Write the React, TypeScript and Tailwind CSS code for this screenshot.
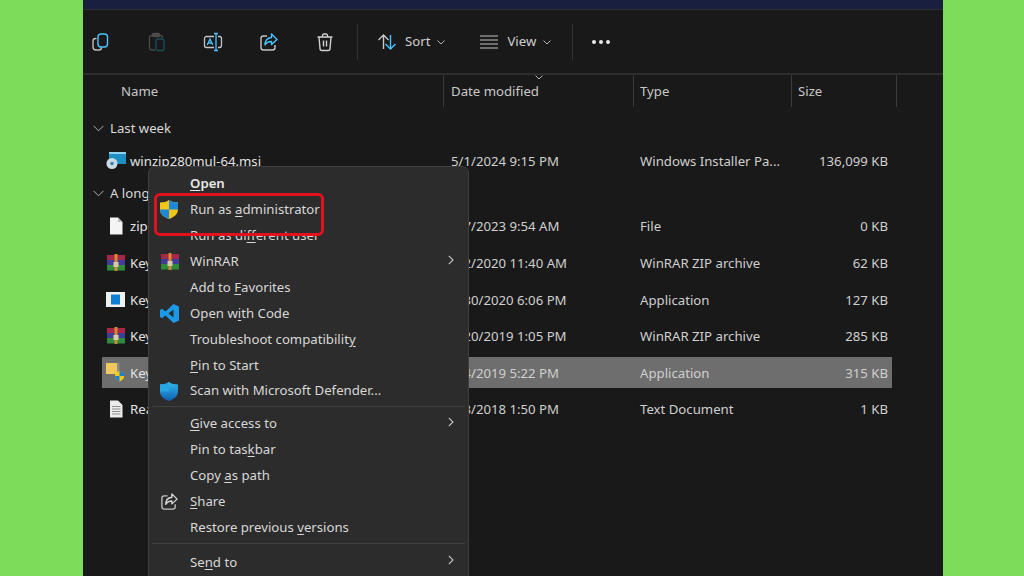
import React from "react";

const Chevron = ({ className = "" }: { className?: string }) => (
  <svg width="8" height="5" viewBox="0 0 8 5" className={className} fill="none" stroke="#b5b5b5" strokeWidth="1">
    <path d="M.5.5 4 4 7.5.5" />
  </svg>
);
const CopyIcon = () => (
  <svg width="20" height="20" viewBox="0 0 20 20" fill="none" strokeWidth="1.4" strokeLinecap="round">
    <path d="M5 6.500H4.500A2.500 2.500 0 0 0 2 9v6a3 3 0 0 0 3 3h3a2.500 2.500 0 0 0 2.500-2" stroke="#bdbdbd" />
    <rect x="7" y="2" width="9.500" height="13" rx="3" stroke="#4cc2ff" />
  </svg>
);
const PasteIcon = () => (
  <svg width="20" height="20" viewBox="0 0 20 20" fill="none" strokeWidth="1.3">
    <path d="M8 18H4.500A2 2 0 0 1 2.500 16V5.500a2 2 0 0 1 2-2h9a2 2 0 0 1 2 2V6" stroke="#4c4c4c" />
    <rect x="5.500" y="1.500" width="7" height="3" rx="1" fill="#4c4c4c" stroke="#4c4c4c" />
    <rect x="9" y="7" width="8" height="11.500" rx="2" stroke="#1e4a60" />
  </svg>
);
const RenameIcon = () => (
  <svg width="20" height="20" viewBox="0 0 20 20" fill="none" strokeWidth="1.3">
    <path d="M11 4.500H3.500A2 2 0 0 0 1.500 6.500v7a2 2 0 0 0 2 2H11M15 4.500h1.500a2 2 0 0 1 2 2v7a2 2 0 0 1-2 2H15" stroke="#c4c4c4" />
    <path d="M13 1.500v17M11 1.500h4M11 18.500h4" stroke="#4cc2ff" />
    <path d="M4.200 13 7 7l2.800 6M5.200 11h3.600" stroke="#4cc2ff" />
  </svg>
);
const ShareIcon = ({ accent = "#4cc2ff", w = 20 }: { accent?: string; w?: number }) => (
  <svg width={w} height={w} viewBox="0 0 20 20" fill="none" strokeWidth="1.4" strokeLinejoin="round">
    <path d="M8 4H4.500A2.500 2.500 0 0 0 2 6.500v9A2.500 2.500 0 0 0 4.500 18h9a2.500 2.500 0 0 0 2.500-2.500V13" stroke="#c4c4c4" />
    <path d="M12.500 2 18 7.500l-5.500 5V9.500C9.500 9.500 7.500 10.500 6 13c0-4 2.500-7 6.500-7.500z" stroke={accent} />
  </svg>
);
const TrashIcon = () => (
  <svg width="20" height="20" viewBox="0 0 20 20" fill="none" stroke="#d0d0d0" strokeWidth="1.4">
    <path d="M2.500 5h15M7.500 5V3.500a1.500 1.500 0 0 1 1.500-1.500h2a1.500 1.500 0 0 1 1.500 1.500V5" />
    <path d="M4 5l1 11.500A2 2 0 0 0 7 18.500h6a2 2 0 0 0 2-2L16 5" />
    <path d="M8.500 8.500v6M11.500 8.500v6" />
  </svg>
);
const SortIcon = () => (
  <svg width="20" height="20" viewBox="0 0 20 20" fill="none" strokeWidth="1.4">
    <path d="M6.500 17V3M1.500 8l5-5 5 5" stroke="#c8c8c8" />
    <path d="M13.500 3v14M8.500 12l5 5 5-5" stroke="#4cc2ff" />
  </svg>
);
const ViewIcon = () => (
  <svg width="20" height="16" viewBox="0 0 20 16" fill="none" stroke="#c4c4c4" strokeWidth="1.2">
    <path d="M1 2h18M1 6h18M1 10h18M1 14h18" />
  </svg>
);
const WinRarIcon = ({ s = 20 }: { s?: number }) => (
  <svg width={s} height={s} viewBox="0 0 20 18">
    <rect x="1" y="1" width="18" height="5" fill="#a62848" />
    <rect x="1" y="6" width="18" height="5" fill="#3f3d9c" />
    <rect x="1" y="11" width="18" height="5.500" fill="#2f8a3c" />
    <rect x="8.500" y="0" width="3" height="8" fill="#d98a2e" />
    <rect x="7.500" y="8" width="5" height="5" fill="#d9c9a0" />
    <rect x="8.500" y="13" width="3" height="4" fill="#c98a3e" />
  </svg>
);
const AppIcon = () => (
  <svg width="19" height="15" viewBox="0 0 19 15">
    <rect width="19" height="15" fill="#f0f0f0" />
    <rect x="5" y="2.500" width="9" height="10" fill="#0f7fd6" />
  </svg>
);
const MsiIcon = () => (
  <svg width="20" height="18" viewBox="0 0 20 18">
    <rect x="3" y="0" width="17" height="12" fill="#1d8fc4" />
    <rect x="3" y="0" width="17" height="2" fill="#8fd0ea" />
    <circle cx="6" cy="11.500" r="5.500" fill="#c9dbe6" />
    <circle cx="6" cy="11.500" r="1.800" fill="#3c7ea6" />
  </svg>
);
const BlankDoc = () => (
  <svg width="14" height="18" viewBox="0 0 14 17">
    <path d="M1 0h8l4.500 4.500V17H1z" fill="#f4f4f4" />
    <path d="M9 0v4.500h4.500" fill="#bdbdbd" />
  </svg>
);
const TextDoc = () => (
  <svg width="14" height="18" viewBox="0 0 14 17">
    <path d="M1 0h8l4.500 4.500V17H1z" fill="#ececec" />
    <path d="M3 6h8.500M3 8.500h8.500M3 11h8.500M3 13.500h8.500" stroke="#8f8f8f" strokeWidth="1" />
  </svg>
);
const AdminFile = () => (
  <svg width="20" height="20" viewBox="0 0 20 20">
    <rect x="0" y="1" width="11" height="11" fill="#f1c75c" />
    <rect x="11" y="1" width="2.500" height="11" fill="#8a8a8a" />
    <path d="M9 10.500l4.500-1.500 4.500 1.500v4c0 2.500-2 4-4.500 5C11 18.500 9 17 9 14.500z" fill="#f6c90e" />
    <path d="M13.500 9l4.500 1.500v3.500h-4.500zM9 14h4.500v5.500C11 18.500 9 17 9 14.500z" fill="#1f7fd0" />
  </svg>
);
const UacShield = () => (
  <svg width="18" height="19" viewBox="0 0 18 19">
    <path d="M9 0c2.500 1.800 5.500 2.500 9 2.500v7C18 14 14.500 17 9 19 3.500 17 0 14 0 9.500v-7C3.500 2.500 6.500 1.800 9 0z" fill="#f5c518" />
    <path d="M9 0c2.500 1.800 5.500 2.500 9 2.500v7H9zM0 9.500h9V19C3.500 17 0 14 0 9.500z" fill="#1e88d8" />
  </svg>
);
const VsCode = () => (
  <svg width="19" height="19" viewBox="0 0 19 19">
    <path d="M13.500 0 19 2.500v14L13.500 19 5.500 11.500 2 14.300 0 13V6l2-1.300 3.500 2.800zM13.500 5.500 8.500 9.500l5 4z" fill="#1a9ae8" />
  </svg>
);
const Defender = () => (
  <svg width="18" height="19" viewBox="0 0 18 19">
    <defs>
      <linearGradient id="d" x1="0" y1="0" x2="0" y2="1">
        <stop offset="0" stopColor="#35b8ee" />
        <stop offset="1" stopColor="#0f5fb0" />
      </linearGradient>
    </defs>
    <path d="M9 0c2.500 1.800 5.500 2.500 9 2.500v7C18 14 14.500 17 9 19 3.500 17 0 14 0 9.500v-7C3.500 2.500 6.500 1.800 9 0z" fill="url(#d)" />
    <path d="M9 0v9.500H0v-7C3.500 2.500 6.500 1.800 9 0z" fill="#27a5e4" />
  </svg>
);

const files = [
  { icon: <BlankDoc />, name: "zip", date: "9/7/2023 9:54 AM", type: "File", size: "0 KB" },
  { icon: <WinRarIcon />, name: "Key", date: "3/2/2020 11:40 AM", type: "WinRAR ZIP archive", size: "62 KB" },
  { icon: <AppIcon />, name: "Key", date: "1/30/2020 6:06 PM", type: "Application", size: "127 KB" },
  { icon: <WinRarIcon />, name: "Key", date: "4/20/2019 1:05 PM", type: "WinRAR ZIP archive", size: "285 KB" },
  { icon: <AdminFile />, name: "Key", date: "7/4/2019 5:22 PM", type: "Application", size: "315 KB", selected: true },
  { icon: <TextDoc />, name: "Rea", date: "5/3/2018 1:50 PM", type: "Text Document", size: "1 KB" },
];

const Row = ({ icon, name, date, type, size, selected }: { icon: React.ReactNode; name: string; date: string; type: string; size: string; selected?: boolean }) => (
  <div className={`ml-[19px] w-[790px] h-[31px] mb-[5.600px] flex items-center text-[#cfcfcf] ${selected ? "bg-[#6e6e6e]" : ""}`}>
    <div className="w-[27px] flex justify-center shrink-0">{icon}</div>
    <div className="w-[313px] shrink-0 text-[#e2e2e2] pl-[1px] pt-[2px]">{name}</div>
    <div className="w-[198px] shrink-0 pt-[2px] pl-[9px]">{date}</div>
    <div className="w-[150px] shrink-0 pt-[2px]">{type}</div>
    <div className="w-[98px] shrink-0 text-right pt-[2px]">{size}</div>
  </div>
);

const U = ({ children }: { children: React.ReactNode }) => <span className="underline underline-offset-2 decoration-1">{children}</span>;

const MenuItem = ({ icon, children, arrow, bold }: { icon?: React.ReactNode; children: React.ReactNode; arrow?: boolean; bold?: boolean }) => (
  <div className={`h-[25.900px] flex items-center shrink-0 ${bold ? "font-semibold text-[#e8e8e8]" : "text-[#d8d8d8]"}`}>
    <div className="w-[41px] pl-[11px] flex items-center shrink-0">{icon}</div>
    <div className="flex-1">{children}</div>
    {arrow && (
      <svg width="6" height="10" viewBox="0 0 6 10" fill="none" stroke="#c8c8c8" strokeWidth="1.100" className="mr-[14px] -mt-[4px]">
        <path d="M.8.8 5 5 .8 9.200" />
      </svg>
    )}
  </div>
);

export default function App() {
  return (
    <div className="relative w-[1024px] h-[576px] overflow-hidden bg-[#7ddc5a] text-[13.200px] leading-none" style={{ fontFamily: '"Noto Sans", "Open Sans", sans-serif' }}>
      <div className="relative ml-[83px] w-[860px] h-[576px] bg-[#191919] flex flex-col overflow-hidden">
        <div className="h-[9px] bg-[#19203f] shrink-0" />
        <div className="h-px bg-[#2f2f2f] shrink-0" />
        <div className="h-[63px] shrink-0 flex items-center pt-[1px]">
          <div className="flex items-center gap-[20px]">
            <div className="w-[36px] flex justify-center"><CopyIcon /></div>
            <div className="w-[36px] flex justify-center"><PasteIcon /></div>
            <div className="w-[36px] flex justify-center"><RenameIcon /></div>
            <div className="w-[36px] flex justify-center"><ShareIcon /></div>
            <div className="w-[36px] flex justify-center"><TrashIcon /></div>
          </div>
          <div className="ml-[14px] w-px h-[36px] bg-[#333333]" />
          <div className="ml-[19px] flex items-center text-[#cfcfcf]">
            <SortIcon />
            <span className="ml-[8px]">Sort</span>
            <Chevron className="ml-[7px]" />
          </div>
          <div className="ml-[34px] flex items-center text-[#cfcfcf]">
            <ViewIcon />
            <span className="ml-[8px]">View</span>
            <Chevron className="ml-[7px]" />
          </div>
          <div className="ml-[21px] w-px h-[36px] bg-[#333333]" />
          <div className="ml-[19px] flex gap-[3px]">
            <span className="w-[4px] h-[4px] rounded-full bg-[#e8e8e8]" />
            <span className="w-[4px] h-[4px] rounded-full bg-[#e8e8e8]" />
            <span className="w-[4px] h-[4px] rounded-full bg-[#e8e8e8]" />
          </div>
        </div>
        <div className="h-[2px] bg-[#2d2d2d] shrink-0" />
        <div className="relative h-[32px] shrink-0 flex items-center text-[#c8c8c8]">
          <div className="w-[360px] pl-[38px] pt-[2px]">Name</div>
          <div className="w-[190px] h-full border-l border-[#3a3a3a] pl-[7px] pt-[2px] flex items-center">Date modified</div>
          <div className="w-[158px] h-full border-l border-[#3a3a3a] pl-[6px] pt-[2px] flex items-center">Type</div>
          <div className="w-[106px] h-full border-x border-[#3a3a3a] pl-[6px] pt-[2px] flex items-center">Size</div>
          <Chevron className="absolute left-[452px] top-0" />
        </div>
        <div className="flex items-center h-[36px] mt-[3px] shrink-0 text-[#d8d8d8]">
          <svg width="11" height="7" viewBox="0 0 11 7" fill="none" stroke="#b0b0b0" className="ml-[10px] mr-[6px]"><path d="M.5.8 5.500 5.800 10.500.8" /></svg>
          <span className="pt-[2px]">Last week</span>
        </div>
        <div className="shrink-0 -mt-[1px]">
          <Row icon={<MsiIcon />} name="winzip280mul-64.msi" date="5/1/2024 9:15 PM" type="Windows Installer Pa..." size="136,099 KB" />
        </div>
        <div className="flex items-center h-[26px] shrink-0 -mt-[1px] text-[#d8d8d8]">
          <svg width="11" height="7" viewBox="0 0 11 7" fill="none" stroke="#b0b0b0" className="ml-[10px] mr-[6px]"><path d="M.5.8 5.500 5.800 10.500.8" /></svg>
          <span>A long time ago</span>
        </div>
        <div className="shrink-0 mt-[4px]">
          {files.map((f, i) => (
            <Row key={i} icon={f.icon} name={f.name} date={f.date} type={f.type} size={f.size} selected={f.selected} />
          ))}
        </div>

        <div className="absolute left-[65px] top-[166px] w-[321px] h-[420px] bg-[#2c2c2c] border border-[#3f3f3f] rounded-[7px] pt-[4px] flex flex-col">
          <MenuItem bold><U>O</U>pen</MenuItem>
          <MenuItem icon={<UacShield />}>Run as <U>a</U>dministrator</MenuItem>
          <MenuItem>Run as di<U>f</U>ferent user</MenuItem>
          <MenuItem icon={<WinRarIcon s={20} />} arrow>WinRAR</MenuItem>
          <MenuItem>Add to <U>F</U>avorites</MenuItem>
          <MenuItem icon={<VsCode />}>Open w<U>i</U>th Code</MenuItem>
          <MenuItem>Troubleshoot compatibilit<U>y</U></MenuItem>
          <MenuItem><U>P</U>in to Start</MenuItem>
          <MenuItem icon={<Defender />}>Scan with Microsoft Defender...</MenuItem>
          <div className="h-px bg-[#414141] mx-[3px] mt-[2px] mb-[4px] shrink-0" />
          <MenuItem arrow><U>G</U>ive access to</MenuItem>
          <MenuItem>Pin to tas<U>k</U>bar</MenuItem>
          <MenuItem>Copy <U>a</U>s path</MenuItem>
          <MenuItem icon={<ShareIcon accent="#d8d8d8" w={19} />}><U>S</U>hare</MenuItem>
          <MenuItem>Restore previous <U>v</U>ersions</MenuItem>
          <div className="h-px bg-[#414141] mx-[3px] mt-[3px] mb-[5px] shrink-0" />
          <MenuItem arrow>Se<U>n</U>d to</MenuItem>
        </div>
        <div className="absolute left-[71px] top-[193px] w-[170px] h-[43px] border-[3px] border-[#e3101e] rounded-[6px]" />
      </div>
    </div>
  );
}
